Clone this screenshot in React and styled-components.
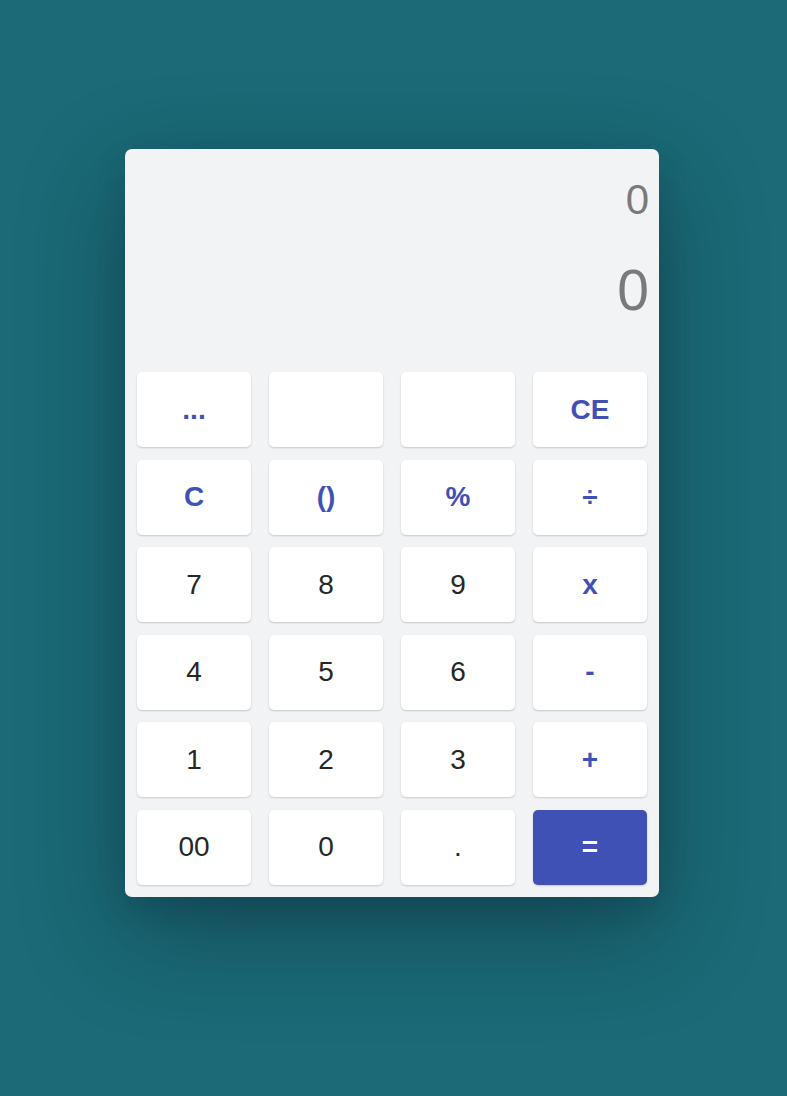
import React from "react";
import styled, { createGlobalStyle } from "styled-components";

const Global = createGlobalStyle`
  html, body {
    margin: 0;
    padding: 0;
    background: #1b6a77;
    font-family: "Liberation Sans", Arial, sans-serif;
  }
`;

const Page = styled.div`
  min-height: 1096px;
  display: flex;
  justify-content: center;
  align-items: flex-start;
  padding-top: 149px;
  padding-right: 3px;
  box-sizing: border-box;
  background: #1b6a77;
`;

const Card = styled.div`
  width: 534px;
  box-sizing: border-box;
  background: #f2f3f5;
  border-radius: 7px;
  padding: 0 12px 12px;
  box-shadow: 0 35px 100px rgba(10, 30, 40, 0.42), 0 12px 30px rgba(10, 30, 40, 0.15);
`;

const Display = styled.div`
  height: 223px;
  box-sizing: border-box;
  padding-top: 30px;
  margin-right: -2px;
  display: flex;
  flex-direction: column;
  align-items: flex-end;
  color: #7a7a7a;
`;

const Expression = styled.div`
  font-size: 42px;
  line-height: 42px;
`;

const Result = styled.div`
  margin-top: 41px;
  font-size: 57px;
  line-height: 57px;
`;

const Keys = styled.div`
  display: grid;
  grid-template-columns: repeat(4, 114px);
  grid-auto-rows: 75px;
  column-gap: 18px;
  row-gap: 12.6px;
`;

const Key = styled.button`
  border: none;
  border-radius: 5px;
  margin: 0;
  padding: 0;
  font-family: "Liberation Sans", Arial, sans-serif;
  font-size: 28px;
  display: flex;
  align-items: center;
  justify-content: center;
  cursor: pointer;
  background: ${(p) => (p.$primary ? "#3f51b5" : "#ffffff")};
  color: ${(p) => (p.$primary ? "#ffffff" : p.$op ? "#3f51b5" : "#262626")};
  font-weight: ${(p) => (p.$op || p.$primary ? 700 : 400)};
  box-shadow: 0 1px 2px rgba(0, 0, 0, 0.18);
`;

const keys = [
  { l: "...", op: true },
  { l: "" },
  { l: "" },
  { l: "CE", op: true },
  { l: "C", op: true },
  { l: "()", op: true },
  { l: "%", op: true },
  { l: "÷", op: true },
  { l: "7" },
  { l: "8" },
  { l: "9" },
  { l: "x", op: true },
  { l: "4" },
  { l: "5" },
  { l: "6" },
  { l: "-", op: true },
  { l: "1" },
  { l: "2" },
  { l: "3" },
  { l: "+", op: true },
  { l: "00" },
  { l: "0" },
  { l: "." },
  { l: "=", primary: true },
];

export default function App() {
  return (
    <>
      <Global />
      <Page>
        <Card>
          <Display>
            <Expression>0</Expression>
            <Result>0</Result>
          </Display>
          <Keys>
            {keys.map((k, i) => (
              <Key key={i} $op={k.op} $primary={k.primary}>
                {k.l}
              </Key>
            ))}
          </Keys>
        </Card>
      </Page>
    </>
  );
}
